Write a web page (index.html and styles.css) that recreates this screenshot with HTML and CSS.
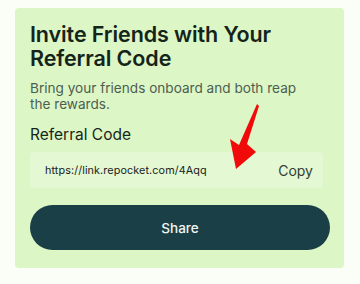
FILE: index.html
```html
<!DOCTYPE html>
<html>
<head>
<meta charset="utf-8">
<link rel="stylesheet" href="styles.css">
</head>
<body>
<div class="page">
  <div class="card">
    <h1 class="title">Invite Friends with Your Referral Code</h1>
    <p class="sub">Bring your friends onboard and both reap the rewards.</p>
    <div class="label">Referral Code</div>
    <div class="field">
      <span class="link">https://link.repocket.com/4Aqq</span>
      <span class="copy">Copy</span>
      <svg class="arrow" width="40" height="70" viewBox="0 0 40 70">
        <polygon fill="#f00a0a" points="33,2 35,4 23,42 32,50 12,67 6,37 15,43"/>
      </svg>
    </div>
    <button class="share">Share</button>
  </div>
</div>
</body>
</html>
```
FILE: styles.css
```css
* { box-sizing: border-box; }
html, body { margin: 0; padding: 0; }
body {
  width: 360px; height: 284px;
  background: #fbfdf7;
  font-family: Inter, "Open Sans", sans-serif;
  overflow: hidden;
}
.page { padding: 8px 16px 0 15px; }
.card {
  background: #dcf6c6;
  border-radius: 4px;
  padding: 14px 14px 18px 15px;
  height: 260px;
  display: flex;
  flex-direction: column;
}
.title {
  margin: 0;
  font-size: 21.5px;
  line-height: 24px;
  font-weight: 600;
  color: #142418;
  letter-spacing: -0.1px;
  width: 290px;
}
.sub {
  margin: 10px 0 0 0;
  font-size: 13.6px;
  line-height: 16px;
  color: #4d5e50;
  width: 285px;
}
.label {
  margin-top: 13px;
  font-size: 15.5px;
  line-height: 20px;
  color: #17261a;
}
.field {
  position: relative;
  margin-top: 7px;
  height: 36px;
  background: #e3f8d3;
  border-radius: 4px;
  display: flex;
  align-items: center;
  justify-content: space-between;
  padding: 0 10px 0 15px;
  width: 293px;
}
.link {
  font-size: 10.8px;
  color: #1a221c;
  letter-spacing: 0.1px;
}
.copy {
  font-size: 14px;
  color: #333d35;
}
.arrow {
  position: absolute;
  left: 194px;
  top: -50px;
}
.share {
  margin-top: 17px;
  width: 300px;
  height: 45px;
  border: none;
  border-radius: 23px;
  background: #1a3f46;
  color: #f1f5f2;
  font-family: Inter, "Open Sans", sans-serif;
  font-size: 13.5px;
  font-weight: 500;
}
```
